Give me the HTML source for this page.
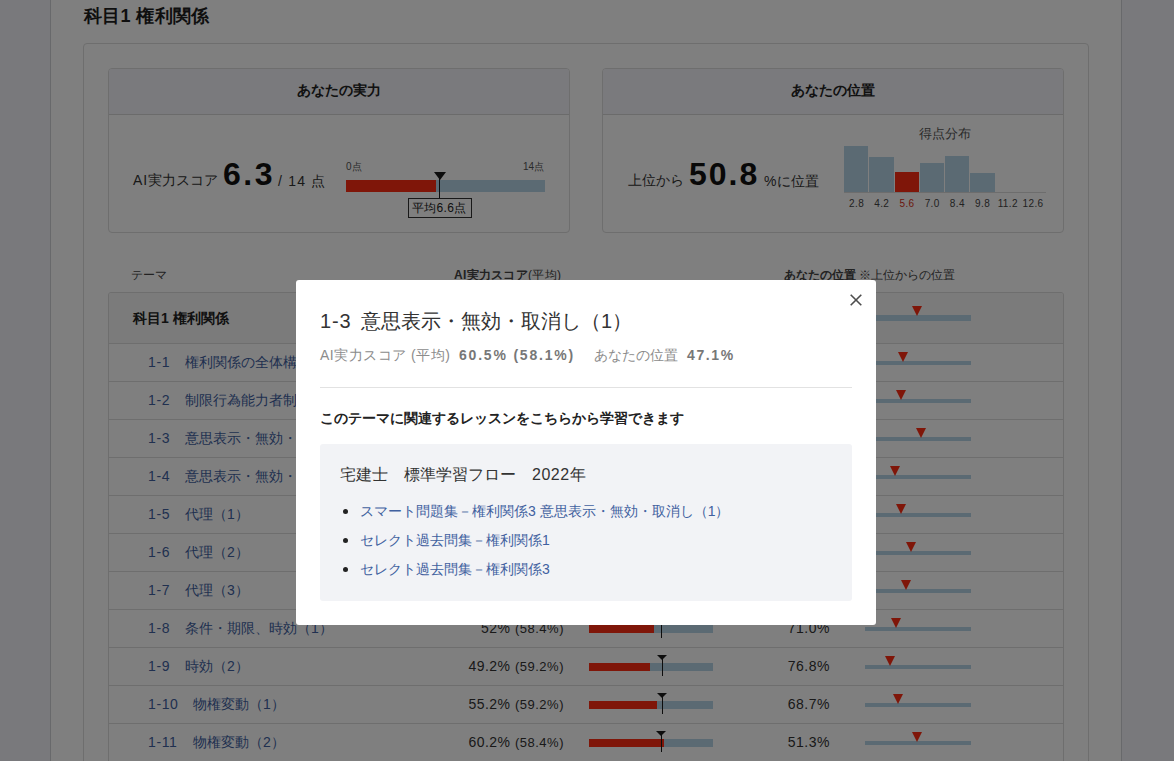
<!DOCTYPE html>
<html lang="ja">
<head>
<meta charset="utf-8">
<style>
*{box-sizing:border-box;margin:0;padding:0}
html,body{width:1174px;height:761px;overflow:hidden}
body{background:#f3f3f9;font-family:"Liberation Sans",sans-serif;color:#333;position:relative}
.a{position:absolute}
.t{position:absolute;white-space:nowrap;line-height:1}
.card{position:absolute;border:1px solid #dcdcdc;border-radius:4px;background:#fff;overflow:hidden}
.chead{position:absolute;left:0;top:0;right:0;height:46px;background:#f4f4fa;border-bottom:1px solid #d6d6d6}
.lnk{color:#41619f}
.num{letter-spacing:0.6px}
.sbar{position:absolute;left:589px;width:124px;height:8px;background:#b6d4e6}
.sred{position:absolute;left:0;top:0;height:8px;background:#ff2c12}
.avg{position:absolute;width:1px;height:21px;background:#1a1a1a}
.avg:before{content:"";position:absolute;left:-5px;top:0;border-left:5.5px solid transparent;border-right:5.5px solid transparent;border-top:5px solid #1a1a1a}
.pbar{position:absolute;left:865px;width:106px;height:4px;background:#b6d4e6}
.tri{position:absolute;width:0;height:0;border-left:5px solid transparent;border-right:5px solid transparent;border-top:10px solid #ff2c12}
.overlay{position:absolute;left:0;top:0;width:1174px;height:761px;background:rgba(0,0,0,.5)}
.modal{position:absolute;left:296px;top:280px;width:580px;height:345px;background:#fff;border-radius:3px}
</style>
</head>
<body>
<div class="a" style="left:50px;top:0;width:1072px;height:761px;background:#fff;border-left:1px solid #d0d2d6;border-right:1px solid #d0d2d6"></div>
<div class="t" style="left:84px;top:7px;font-size:18px;font-weight:bold;color:#1e1e1e;letter-spacing:0.3px">科目1 権利関係</div>
<div class="card" style="left:83px;top:43px;width:1006px;height:760px"></div>
<div class="card" style="left:108px;top:68px;width:462px;height:165px"><div class="chead"></div></div>
<div class="t" style="left:109px;width:460px;text-align:center;top:83px;font-size:14px;font-weight:bold;color:#222">あなたの実力</div>
<div class="t" style="left:133px;top:173px;font-size:14px;color:#333"><span style="letter-spacing:1px">AI</span>実力スコア</div>
<div class="t" style="left:223px;top:158px;font-size:32px;font-weight:bold;color:#111;letter-spacing:2.5px">6.3</div>
<div class="t" style="left:278px;top:174px;font-size:14px;color:#333;letter-spacing:1.2px">/ 14 点</div>
<div class="t" style="left:346px;top:162px;font-size:10px;color:#555">0点</div>
<div class="t" style="left:523px;top:162px;font-size:10px;color:#555">14点</div>
<div class="a" style="left:346px;top:180px;width:199px;height:12px;background:#b6d4e6"></div>
<div class="a" style="left:346px;top:180px;width:90px;height:12px;background:#ff2c12"></div>
<div class="a" style="left:439px;top:172px;width:1px;height:26px;background:#1a1a1a"></div>
<div class="a" style="left:434px;top:172px;width:0;height:0;border-left:6px solid transparent;border-right:6px solid transparent;border-top:8px solid #1a1a1a"></div>
<div class="a" style="left:408px;top:198px;width:64px;height:20px;border:1px solid #333;background:#fff"></div>
<div class="t" style="left:412px;top:202px;font-size:12px;color:#222;letter-spacing:0.3px">平均6.6点</div>
<div class="card" style="left:602px;top:68px;width:462px;height:165px"><div class="chead"></div></div>
<div class="t" style="left:603px;width:460px;text-align:center;top:83px;font-size:14px;font-weight:bold;color:#222">あなたの位置</div>
<div class="t" style="left:628px;top:173px;font-size:14px;color:#333">上位から</div>
<div class="t" style="left:689px;top:158px;font-size:32px;font-weight:bold;color:#111;letter-spacing:2px">50.8</div>
<div class="t" style="left:764px;top:174px;font-size:14px;color:#333;letter-spacing:0.3px">%に位置</div>
<div class="t" style="left:919px;top:127px;font-size:13px;color:#555">得点分布</div>
<div class="a" style="left:844px;top:146px;width:24px;height:46px;background:#b6d4e6"></div>
<div class="a" style="left:869px;top:157px;width:25px;height:35px;background:#b6d4e6"></div>
<div class="a" style="left:895px;top:172px;width:24px;height:20px;background:#ff2c12"></div>
<div class="a" style="left:920px;top:163px;width:24px;height:29px;background:#b6d4e6"></div>
<div class="a" style="left:945px;top:156px;width:24px;height:36px;background:#b6d4e6"></div>
<div class="a" style="left:970px;top:173px;width:25px;height:19px;background:#b6d4e6"></div>
<div class="a" style="left:844px;top:192px;width:202px;height:1px;background:#dadada"></div>
<div class="t" style="left:836.6px;width:40px;text-align:center;top:199px;font-size:10px;color:#444;letter-spacing:0.4px">2.8</div>
<div class="t" style="left:861.8px;width:40px;text-align:center;top:199px;font-size:10px;color:#444;letter-spacing:0.4px">4.2</div>
<div class="t" style="left:887.0px;width:40px;text-align:center;top:199px;font-size:10px;color:#d83018;letter-spacing:0.4px">5.6</div>
<div class="t" style="left:912.2px;width:40px;text-align:center;top:199px;font-size:10px;color:#444;letter-spacing:0.4px">7.0</div>
<div class="t" style="left:937.4px;width:40px;text-align:center;top:199px;font-size:10px;color:#444;letter-spacing:0.4px">8.4</div>
<div class="t" style="left:962.6px;width:40px;text-align:center;top:199px;font-size:10px;color:#444;letter-spacing:0.4px">9.8</div>
<div class="t" style="left:987.8px;width:40px;text-align:center;top:199px;font-size:10px;color:#444;letter-spacing:0.4px">11.2</div>
<div class="t" style="left:1013.0px;width:40px;text-align:center;top:199px;font-size:10px;color:#444;letter-spacing:0.4px">12.6</div>
<div class="t" style="left:131px;top:269px;font-size:12px;color:#444">テーマ</div>
<div class="t" style="left:454px;top:269px;font-size:12px;color:#444;letter-spacing:0.3px"><b>AI実力スコア</b>(平均)</div>
<div class="t" style="left:784px;top:269px;font-size:12px;color:#444"><b>あなたの位置</b> ※上位からの位置</div>
<div class="a" style="left:108px;top:292px;width:956px;height:520px;border:1px solid #dcdcdc;border-radius:3px;overflow:hidden"><div class="a" style="left:0;top:0;width:954px;height:50px;background:#f7f7f7"></div></div>
<div class="t" style="left:133px;top:311px;font-size:14px;font-weight:bold;color:#222">科目1 権利関係</div>
<div class="pbar" style="top:315px;height:6px"></div>
<div class="tri" style="left:912.2px;top:306px"></div>
<div class="a" style="left:109px;top:343px;width:954px;height:1px;background:#dcdcdc"></div>
<div class="t lnk num" style="left:148px;top:355px;font-size:14px">1-1</div>
<div class="t lnk" style="left:185px;top:355px;font-size:14px">権利関係の全体構造</div>
<div class="pbar" style="top:361px"></div>
<div class="tri" style="left:897.9px;top:352px"></div>
<div class="a" style="left:109px;top:381px;width:954px;height:1px;background:#dcdcdc"></div>
<div class="t lnk num" style="left:148px;top:393px;font-size:14px">1-2</div>
<div class="t lnk" style="left:185px;top:393px;font-size:14px">制限行為能力者制度</div>
<div class="pbar" style="top:399px"></div>
<div class="tri" style="left:896.0px;top:390px"></div>
<div class="a" style="left:109px;top:419px;width:954px;height:1px;background:#dcdcdc"></div>
<div class="t lnk num" style="left:148px;top:431px;font-size:14px">1-3</div>
<div class="t lnk" style="left:185px;top:431px;font-size:14px">意思表示・無効・取消し（1）</div>
<div class="t" style="right:610px;top:431px;font-size:14px;color:#333;letter-spacing:0.5px">60.5% <span style="font-size:13px">(58.1%)</span></div>
<div class="sbar" style="top:435px"><div class="sred" style="width:75.0px"></div></div>
<div class="avg" style="left:660.5px;top:427px"></div>
<div class="t" style="right:344px;top:431px;font-size:14px;color:#333;letter-spacing:0.5px">47.1%</div>
<div class="pbar" style="top:437px"></div>
<div class="tri" style="left:916.1px;top:428px"></div>
<div class="a" style="left:109px;top:457px;width:954px;height:1px;background:#dcdcdc"></div>
<div class="t lnk num" style="left:148px;top:469px;font-size:14px">1-4</div>
<div class="t lnk" style="left:185px;top:469px;font-size:14px">意思表示・無効・取消し（2）</div>
<div class="pbar" style="top:475px"></div>
<div class="tri" style="left:890.0px;top:466px"></div>
<div class="a" style="left:109px;top:495px;width:954px;height:1px;background:#dcdcdc"></div>
<div class="t lnk num" style="left:148px;top:507px;font-size:14px">1-5</div>
<div class="t lnk" style="left:185px;top:507px;font-size:14px">代理（1）</div>
<div class="pbar" style="top:513px"></div>
<div class="tri" style="left:896.0px;top:504px"></div>
<div class="a" style="left:109px;top:533px;width:954px;height:1px;background:#dcdcdc"></div>
<div class="t lnk num" style="left:148px;top:545px;font-size:14px">1-6</div>
<div class="t lnk" style="left:185px;top:545px;font-size:14px">代理（2）</div>
<div class="pbar" style="top:551px"></div>
<div class="tri" style="left:906.0px;top:542px"></div>
<div class="a" style="left:109px;top:571px;width:954px;height:1px;background:#dcdcdc"></div>
<div class="t lnk num" style="left:148px;top:583px;font-size:14px">1-7</div>
<div class="t lnk" style="left:185px;top:583px;font-size:14px">代理（3）</div>
<div class="pbar" style="top:589px"></div>
<div class="tri" style="left:901.0px;top:580px"></div>
<div class="a" style="left:109px;top:609px;width:954px;height:1px;background:#dcdcdc"></div>
<div class="t lnk num" style="left:148px;top:621px;font-size:14px">1-8</div>
<div class="t lnk" style="left:185px;top:621px;font-size:14px">条件・期限、時効（1）</div>
<div class="t" style="right:610px;top:621px;font-size:14px;color:#333;letter-spacing:0.5px">52% <span style="font-size:13px">(58.4%)</span></div>
<div class="sbar" style="top:625px"><div class="sred" style="width:64.5px"></div></div>
<div class="avg" style="left:660.9px;top:617px"></div>
<div class="t" style="right:344px;top:621px;font-size:14px;color:#333;letter-spacing:0.5px">71.0%</div>
<div class="pbar" style="top:627px"></div>
<div class="tri" style="left:890.7px;top:618px"></div>
<div class="a" style="left:109px;top:647px;width:954px;height:1px;background:#dcdcdc"></div>
<div class="t lnk num" style="left:148px;top:659px;font-size:14px">1-9</div>
<div class="t lnk" style="left:185px;top:659px;font-size:14px">時効（2）</div>
<div class="t" style="right:610px;top:659px;font-size:14px;color:#333;letter-spacing:0.5px">49.2% <span style="font-size:13px">(59.2%)</span></div>
<div class="sbar" style="top:663px"><div class="sred" style="width:61.0px"></div></div>
<div class="avg" style="left:661.9px;top:655px"></div>
<div class="t" style="right:344px;top:659px;font-size:14px;color:#333;letter-spacing:0.5px">76.8%</div>
<div class="pbar" style="top:665px"></div>
<div class="tri" style="left:884.6px;top:656px"></div>
<div class="a" style="left:109px;top:685px;width:954px;height:1px;background:#dcdcdc"></div>
<div class="t lnk num" style="left:148px;top:697px;font-size:14px">1-10</div>
<div class="t lnk" style="left:193px;top:697px;font-size:14px">物権変動（1）</div>
<div class="t" style="right:610px;top:697px;font-size:14px;color:#333;letter-spacing:0.5px">55.2% <span style="font-size:13px">(59.2%)</span></div>
<div class="sbar" style="top:701px"><div class="sred" style="width:68.4px"></div></div>
<div class="avg" style="left:661.9px;top:693px"></div>
<div class="t" style="right:344px;top:697px;font-size:14px;color:#333;letter-spacing:0.5px">68.7%</div>
<div class="pbar" style="top:703px"></div>
<div class="tri" style="left:893.2px;top:694px"></div>
<div class="a" style="left:109px;top:723px;width:954px;height:1px;background:#dcdcdc"></div>
<div class="t lnk num" style="left:148px;top:735px;font-size:14px">1-11</div>
<div class="t lnk" style="left:193px;top:735px;font-size:14px">物権変動（2）</div>
<div class="t" style="right:610px;top:735px;font-size:14px;color:#333;letter-spacing:0.5px">60.2% <span style="font-size:13px">(58.4%)</span></div>
<div class="sbar" style="top:739px"><div class="sred" style="width:74.6px"></div></div>
<div class="avg" style="left:660.9px;top:731px"></div>
<div class="t" style="right:344px;top:735px;font-size:14px;color:#333;letter-spacing:0.5px">51.3%</div>
<div class="pbar" style="top:741px"></div>
<div class="tri" style="left:911.6px;top:732px"></div>
<div class="overlay"></div>
<div class="modal">
<div class="t" style="left:24px;top:31px;font-size:20px;color:#333;letter-spacing:0.8px">1-3</div>
<div class="t" style="left:65px;top:31px;font-size:20px;color:#333">意思表示・無効・取消し（1）</div>
<div class="t" style="left:24px;top:68px;font-size:14px;color:#8c8c8c;letter-spacing:0.5px">AI実力スコア (平均)</div>
<div class="t" style="left:163px;top:68px;font-size:14px;font-weight:bold;color:#777;letter-spacing:1.8px">60.5% (58.1%)</div>
<div class="t" style="left:298px;top:68px;font-size:14px;color:#8c8c8c">あなたの位置</div>
<div class="t" style="left:391px;top:68px;font-size:14px;font-weight:bold;color:#777;letter-spacing:1.6px">47.1%</div>
<div class="a" style="left:24px;top:107px;width:532px;height:1px;background:#e2e2e2"></div>
<div class="t" style="left:24px;top:131px;font-size:14px;font-weight:bold;color:#222">このテーマに関連するレッスンをこちらから学習できます</div>
<div class="a" style="left:24px;top:164px;width:532px;height:157px;background:#f2f3f6;border-radius:3px"></div>
<div class="t" style="left:44px;top:187px;font-size:16px;color:#333">宅建士　標準学習フロー　<span style="letter-spacing:0.5px">2022</span>年</div>
<div class="a" style="left:47px;top:229px;width:5px;height:5px;border-radius:50%;background:#222"></div>
<div class="t lnk" style="left:64px;top:224px;font-size:14px">スマート問題集－権利関係3 意思表示・無効・取消し（1）</div>
<div class="a" style="left:47px;top:258px;width:5px;height:5px;border-radius:50%;background:#222"></div>
<div class="t lnk" style="left:64px;top:253px;font-size:14px">セレクト過去問集－権利関係1</div>
<div class="a" style="left:47px;top:287px;width:5px;height:5px;border-radius:50%;background:#222"></div>
<div class="t lnk" style="left:64px;top:282px;font-size:14px">セレクト過去問集－権利関係3</div>
<svg class="a" style="left:554px;top:14px" width="12" height="12" viewBox="0 0 12 12"><path d="M0.7 0.7L11.3 11.3M11.3 0.7L0.7 11.3" stroke="#4d4d4d" stroke-width="1.6"/></svg>
</div>
</body>
</html>
